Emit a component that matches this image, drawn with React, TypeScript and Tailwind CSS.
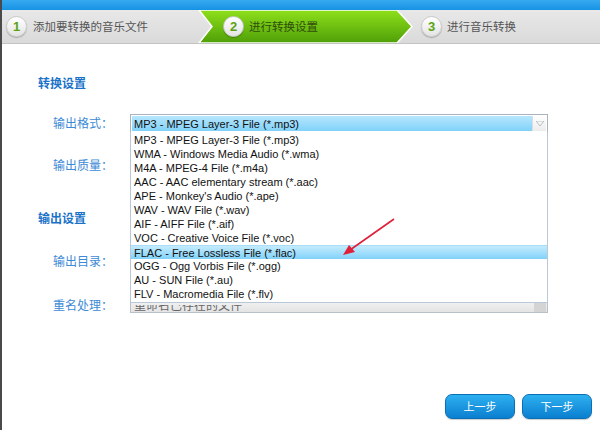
import React from 'react';

const formats = [
  'MP3 - MPEG Layer-3 File (*.mp3)',
  'WMA - Windows Media Audio (*.wma)',
  'M4A - MPEG-4 File (*.m4a)',
  'AAC - AAC elementary stream (*.aac)',
  "APE - Monkey's Audio (*.ape)",
  'WAV - WAV File (*.wav)',
  'AIF - AIFF File (*.aif)',
  'VOC - Creative Voice File (*.voc)',
  'FLAC - Free Lossless File (*.flac)',
  'OGG - Ogg Vorbis File (*.ogg)',
  'AU - SUN File (*.au)',
  'FLV - Macromedia File (*.flv)',
];

const cjk = "font-['Noto_Sans_CJK_SC',sans-serif]";
const latin = "font-['Liberation_Sans','Noto_Sans_CJK_SC',sans-serif]";

function StepNum({ n }: { n: number }) {
  return (
    <span className="w-[21px] h-[21px] rounded-full bg-gradient-to-b from-white to-[#e4e4e4] border border-[#c9c9c9] shadow-[0_1px_1px_rgba(0,0,0,0.25)] flex items-center justify-center text-[13px] font-bold text-[#5aa412] font-['Liberation_Sans',sans-serif] shrink-0">
      {n}
    </span>
  );
}

function Label({ children }: { children: React.ReactNode }) {
  return <div className={`w-[92px] pl-[15px] text-[12px] text-[#3d8ad6] ${cjk}`}>{children}</div>;
}

export default function App() {
  return (
    <div className={`w-[600px] h-[430px] bg-white relative overflow-hidden ${cjk}`}>
      <div className="absolute left-0 top-0 bottom-0 w-[2px] bg-[#4a4a4a] z-20" />
      <div className="h-[10px] bg-gradient-to-b from-[#36a9f0] to-[#1593e4]" />
      <div className="relative h-[34px] bg-gradient-to-b from-[#e8e8e8] to-[#dadada] border-b border-[#c4c4c4] flex items-center">
        <svg className="absolute left-0 top-0" width="600" height="33" viewBox="0 0 600 33">
          <defs>
            <linearGradient id="g" x1="0" y1="0" x2="0" y2="1">
              <stop offset="0" stopColor="#8ee01a" />
              <stop offset="1" stopColor="#4f9f08" />
            </linearGradient>
          </defs>
          <polygon points="199,0 397,0 412,16.5 397,33 199,33 212,16.5" fill="url(#g)" stroke="#ffffff" strokeWidth="1.5" />
        </svg>
        <div className="relative flex items-center gap-[6px] pl-[6px] w-[217px] text-[11.5px] text-[#555]">
          <StepNum n={1} />
          <span>添加要转换的音乐文件</span>
        </div>
        <div className="relative flex items-center gap-[5px] pl-[6px] w-[198px] text-[11.5px] text-[#2f4d0c]">
          <StepNum n={2} />
          <span>进行转换设置</span>
        </div>
        <div className="relative flex items-center gap-[5px] pl-[6px] text-[11.5px] text-[#555]">
          <StepNum n={3} />
          <span>进行音乐转换</span>
        </div>
      </div>

      <div className="pl-[38px] pt-[30px] text-[12px] font-bold text-[#1b72c9]">转换设置</div>

      <div className="relative mt-[22px] pl-[38px]">
        <div className="flex items-center h-[18px]">
          <Label>输出格式：</Label>
          <div className="w-[418px] h-[19px] border border-[#a9b3bf] bg-white flex items-stretch p-[1px]">
            <div className={`flex-1 bg-gradient-to-b from-[#b6e6fd] to-[#80d2fa] text-[11px] text-[#111] leading-[16px] pl-[2px] ${latin}`}>
              {formats[0]}
            </div>
            <div className="w-[14px] flex items-center justify-center bg-gradient-to-b from-white to-[#ececec] border-l border-[#d7dde3]">
              <svg width="8" height="5" viewBox="0 0 8 5">
                <polygon points="0,0 8,0 4,5" fill="none" stroke="#b8bec5" strokeWidth="1" />
              </svg>
            </div>
          </div>
        </div>
        <div className="flex items-center h-[18px] mt-[24px]">
          <Label>输出质量：</Label>
        </div>
        <div className="mt-[35px] h-[18px] text-[12px] font-bold text-[#1b72c9]">输出设置</div>
        <div className="flex items-center h-[18px] mt-[25px]">
          <Label>输出目录：</Label>
        </div>
        <div className="flex items-center h-[18px] mt-[26px]">
          <Label>重名处理：</Label>
          <div className="w-[418px] h-[11px] mt-[5px] border border-t-0 border-[#b8c0c8] bg-gradient-to-b from-[#f1f1f1] to-[#e4e4e4] flex items-end justify-between overflow-hidden">
            <span className="text-[12px] text-[#666] pl-[3px] leading-[12px] mb-[1px] -mt-[8px] overflow-hidden h-[6px] flex items-end">
              <span className="block leading-[12px]">重命名已存在的文件</span>
            </span>
            <span className="w-[12px] h-[10px] mr-[1px] bg-[#d4d4d4]" />
          </div>
        </div>

        <div className="absolute left-[130px] top-[18px] w-[418px] bg-white border border-[#b9c8d6] border-t-0 z-10 py-[1px]">
          {formats.map((f, i) => (
            <div
              key={f}
              className={`h-[14px] leading-[14px] pl-[3px] text-[11px] text-[#111] ${latin} ${i === 8 ? 'bg-gradient-to-b from-[#c3ebfd] to-[#80d2fa] border-t border-[#a9dcf5]' : ''}`}
            >
              {f}
            </div>
          ))}
        </div>
      </div>

      <svg className="absolute left-0 top-0 z-20 pointer-events-none" width="600" height="430" viewBox="0 0 600 430">
        <line x1="394" y1="219" x2="350" y2="250" stroke="#e0203a" strokeWidth="1.6" />
        <polygon points="343,255 349,245 355,252" fill="#e0203a" />
      </svg>

      <div className="absolute right-[8px] bottom-[11px] flex gap-[7px]">
        {['上一步', '下一步'].map((t) => (
          <button
            key={t}
            className="w-[70px] h-[25px] rounded-[7px] bg-gradient-to-b from-[#2db0f0] to-[#0a7fd0] border border-[#0b6fb5] text-white text-[11px] shadow-[0_1px_1px_rgba(0,0,0,0.2)]"
          >
            {t}
          </button>
        ))}
      </div>
    </div>
  );
}
